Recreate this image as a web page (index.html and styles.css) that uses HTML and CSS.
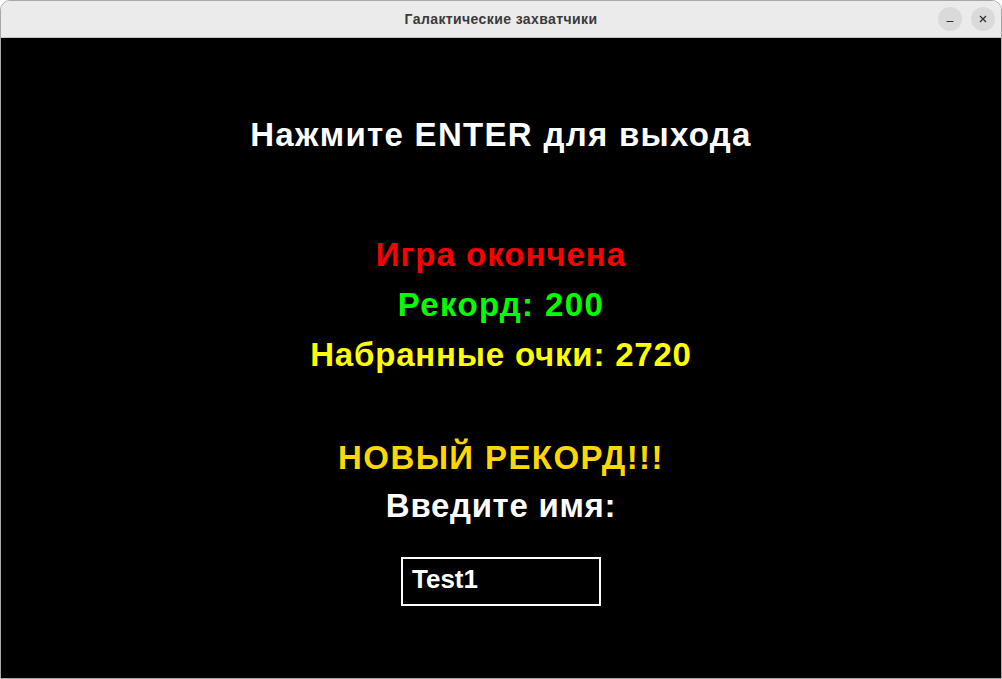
FILE: index.html
```html
<!DOCTYPE html>
<html lang="ru">
<head>
<meta charset="utf-8">
<title>Галактические захватчики</title>
<link rel="stylesheet" href="styles.css">
</head>
<body>
<div class="window">
  <header class="titlebar">
    <span class="title">Галактические захватчики</span>
    <div class="controls">
      <span class="btn">
        <svg width="10" height="10" viewBox="0 0 10 10"><path d="M1.5 7.5h7" stroke="#333" stroke-width="1.2"/></svg>
      </span>
      <span class="btn">
        <svg width="10" height="10" viewBox="0 0 10 10"><path d="M2 2l6 6M8 2l-6 6" stroke="#333" stroke-width="1.3"/></svg>
      </span>
    </div>
  </header>
  <main class="screen">
    <p class="line white exit">Нажмите ENTER для выхода</p>
    <p class="line red over">Игра окончена</p>
    <p class="line green score best">Рекорд: 200</p>
    <p class="line yellow score points">Набранные очки: 2720</p>
    <p class="line gold record">НОВЫЙ РЕКОРД!!!</p>
    <p class="line white prompt">Введите имя:</p>
    <div class="namebox">Test1</div>
  </main>
</div>
</body>
</html>
```

FILE: styles.css
```css
html, body {
  margin: 0;
  padding: 0;
  background: #ffffff;
}
.window {
  width: 1002px;
  height: 679px;
  box-sizing: border-box;
  border: 1px solid #a8a8a8;
  border-radius: 10px 10px 0 0;
  overflow: hidden;
  display: flex;
  flex-direction: column;
}
.titlebar {
  height: 36px;
  flex: none;
  background: #ebebeb;
  border-bottom: 1px solid #c4c4c4;
  display: flex;
  align-items: center;
  justify-content: center;
  position: relative;
}
.title {
  font-family: "Liberation Sans", "DejaVu Sans", sans-serif;
  font-weight: bold;
  font-size: 14px;
  color: #3a3a3a;
  letter-spacing: 0.4px;
}
.controls {
  position: absolute;
  right: 6px;
  top: 6px;
  display: flex;
  gap: 9px;
}
.btn {
  width: 24px;
  height: 24px;
  border-radius: 50%;
  background: #dadada;
  display: flex;
  align-items: center;
  justify-content: center;
}
.screen {
  flex: 1;
  background: #000000;
  display: flex;
  flex-direction: column;
  align-items: center;
  padding-top: 73px;
  font-family: "Liberation Sans", Arial, sans-serif;
  font-weight: bold;
}
.line {
  margin: 0;
  font-size: 33px;
  letter-spacing: 1px;
  line-height: 48px;
}
.exit { letter-spacing: 1.3px; }
.over { margin-top: 72px; }
.score { margin-top: 2px; }
.best { letter-spacing: 1.4px; }
.points { letter-spacing: 0.8px; }
.record { margin-top: 55px; letter-spacing: 1.4px; }
.prompt { letter-spacing: 0.7px; }
.white { color: #ffffff; }
.red { color: #ff0000; }
.green { color: #00ff00; }
.yellow { color: #ffff00; }
.gold { color: #ffd700; }
.namebox {
  margin-top: 27px;
  width: 200px;
  height: 49px;
  box-sizing: border-box;
  border: 2px solid #ffffff;
  color: #ffffff;
  font-size: 26px;
  line-height: 41px;
  padding: 0 0 4px 9px;
}
```
